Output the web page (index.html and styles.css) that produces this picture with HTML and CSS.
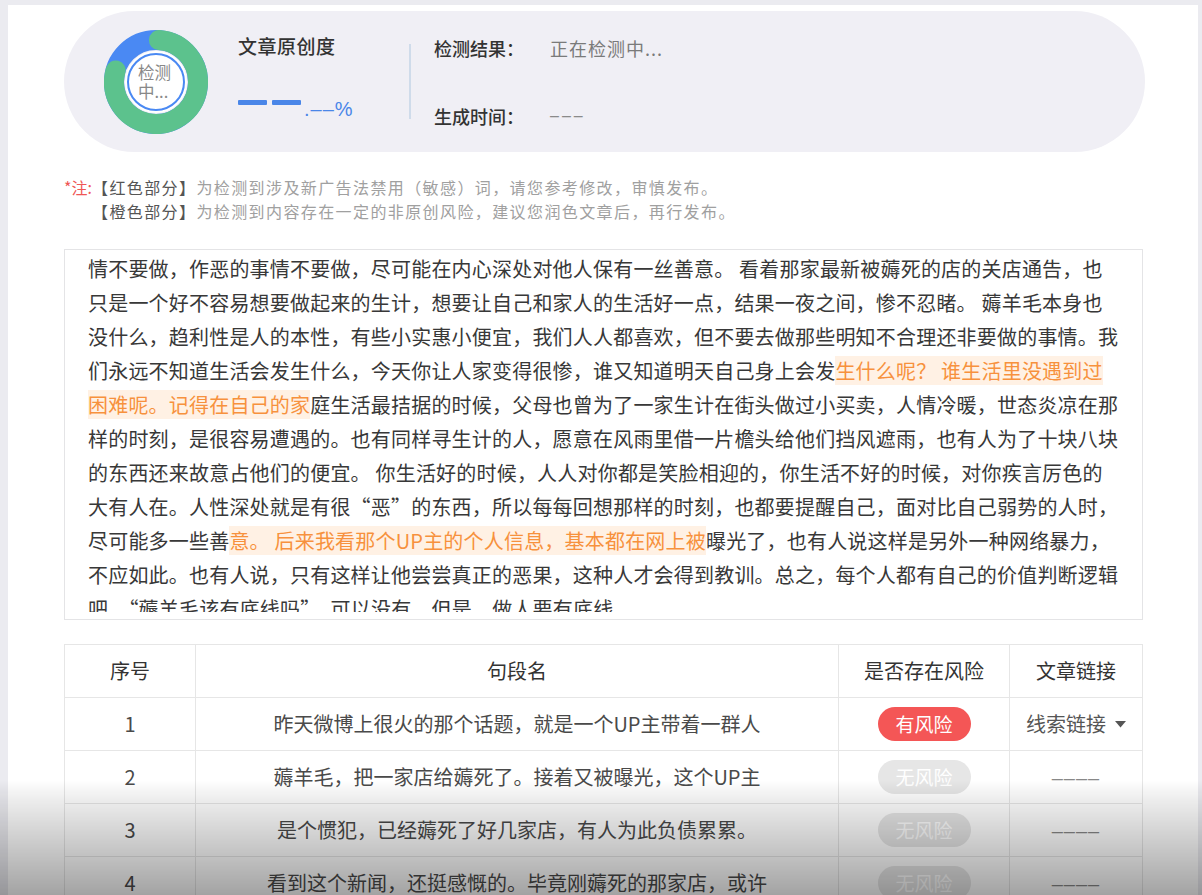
FILE: index.html
```html
<!DOCTYPE html>
<html lang="zh-CN">
<head>
<meta charset="utf-8">
<title>文章原创度检测</title>
<link rel="stylesheet" href="styles.css">
</head>
<body>
<div class="page">
  <section class="summary">
    <div class="donut">
      <svg class="donut-svg" width="104" height="104" viewBox="0 0 104 104">
        <circle cx="52" cy="52" r="42" fill="none" stroke="#4a89f3" stroke-width="20"/>
        <path d="M54.93 10.10 A42 42 0 1 1 11.63 40.42" fill="none" stroke="#5cc28d" stroke-width="20" stroke-linecap="round"/>
        <circle cx="52" cy="52" r="31" fill="#ffffff"/>
        <circle cx="52" cy="52" r="28" fill="none" stroke="#4a89f3" stroke-width="2"/>
      </svg>
      <div class="donut-text">检测<br>中...</div>
    </div>
    <div class="rate">
      <div class="rate-title">文章原创度</div>
      <div class="rate-value">
        <span class="bar"></span><span class="bar"></span><span class="pct">.––%</span>
      </div>
    </div>
    <div class="divider"></div>
    <div class="result">
      <div class="result-row"><span class="result-label">检测结果：</span><span class="result-val">正在检测中...</span></div>
      <div class="result-row"><span class="result-label">生成时间：</span><span class="result-val dash">–––</span></div>
    </div>
  </section>

  <section class="notes">
    <span class="note-mark">*注:</span>
    <div class="note-lines">
      <div><span class="note-key">【红色部分】</span>为检测到涉及新广告法禁用（敏感）词，请您参考修改，审慎发布。</div>
      <div><span class="note-key">【橙色部分】</span>为检测到内容存在一定的非原创风险，建议您润色文章后，再行发布。</div>
    </div>
  </section>

  <section class="article">
    <div class="article-scroll">
      <p class="article-text">情不要做，作恶的事情不要做，尽可能在内心深处对他人保有一丝善意。 看着那家最新被薅死的店的关店通告，也<br>只是一个好不容易想要做起来的生计，想要让自己和家人的生活好一点，结果一夜之间，惨不忍睹。 薅羊毛本身也<br>没什么，趋利性是人的本性，有些小实惠小便宜，我们人人都喜欢，但不要去做那些明知不合理还非要做的事情。我<br>们永远不知道生活会发生什么，今天你让人家变得很惨，谁又知道明天自己身上会发<span class="hl">生什么呢？ 谁生活里没遇到过<br>困难呢。记得在自己的家</span>庭生活最拮据的时候，父母也曾为了一家生计在街头做过小买卖，人情冷暖，世态炎凉在那<br>样的时刻，是很容易遭遇的。也有同样寻生计的人，愿意在风雨里借一片檐头给他们挡风遮雨，也有人为了十块八块<br>的东西还来故意占他们的便宜。 你生活好的时候，人人对你都是笑脸相迎的，你生活不好的时候，对你疾言厉色的<br>大有人在。人性深处就是有很“恶”的东西，所以每每回想那样的时刻，也都要提醒自己，面对比自己弱势的人时，<br>尽可能多一些善<span class="hl">意。 后来我看那个UP主的个人信息，基本都在网上被</span>曝光了，也有人说这样是另外一种网络暴力，<br>不应如此。也有人说，只有这样让他尝尝真正的恶果，这种人才会得到教训。总之，每个人都有自己的价值判断逻辑<br>吧，“薅羊毛该有底线吗”，可以没有，但是，做人要有底线</p>
    </div>
  </section>

  <table class="risk-table">
    <colgroup>
      <col class="c-no"><col class="c-seg"><col class="c-risk"><col class="c-link">
    </colgroup>
    <thead>
      <tr><th>序号</th><th>句段名</th><th>是否存在风险</th><th>文章链接</th></tr>
    </thead>
    <tbody>
      <tr>
        <td>1</td>
        <td>昨天微博上很火的那个话题，就是一个UP主带着一群人</td>
        <td><span class="badge badge-risk">有风险</span></td>
        <td><span class="link">线索链接<svg class="caret" width="11" height="7" viewBox="0 0 11 7"><polygon points="0,0 11,0 5.5,6.5" fill="#555"/></svg></span></td>
      </tr>
      <tr>
        <td>2</td>
        <td>薅羊毛，把一家店给薅死了。接着又被曝光，这个UP主</td>
        <td><span class="badge badge-safe">无风险</span></td>
        <td><span class="dashes">––––</span></td>
      </tr>
      <tr>
        <td>3</td>
        <td>是个惯犯，已经薅死了好几家店，有人为此负债累累。</td>
        <td><span class="badge badge-safe">无风险</span></td>
        <td><span class="dashes">––––</span></td>
      </tr>
      <tr>
        <td>4</td>
        <td>看到这个新闻，还挺感慨的。毕竟刚薅死的那家店，或许</td>
        <td><span class="badge badge-safe">无风险</span></td>
        <td><span class="dashes">––––</span></td>
      </tr>
    </tbody>
  </table>
</div>
<div class="shade"></div>
</body>
</html>
```

FILE: styles.css
```css
html, body {
  margin: 0;
  padding: 0;
}

body {
  background: #ebebf0;
  font-family: "Noto Sans CJK SC", "Noto Sans", sans-serif;
  color: #333;
  overflow: hidden;
  height: 895px;
}

.page {
  margin: 5px 4px 0 8px;
  background: #ffffff;
  padding: 6px 52px 40px 56px;
  height: 950px;
  box-sizing: border-box;
}

/* ---------- summary pill ---------- */
.summary {
  width: 1081px;
  height: 141px;
  border-radius: 71px;
  background: #f0eff5;
  display: flex;
  align-items: center;
  padding-left: 40px;
  box-sizing: border-box;
}

.donut {
  display: grid;
  width: 104px;
  height: 104px;
  place-items: center;
}

.donut-svg,
.donut-text {
  grid-area: 1 / 1;
}

.donut-svg {
  display: block;
}

.donut-text {
  width: 36px;
  font-size: 16.5px;
  line-height: 19px;
  color: #888;
}

.rate {
  align-self: stretch;
  margin-left: 30px;
  width: 171px;
  padding-top: 24px;
  box-sizing: border-box;
}

.rate-title {
  font-size: 19px;
  line-height: 22px;
  font-weight: 500;
  color: #333;
  letter-spacing: 0.5px;
}

.rate-value {
  margin-top: 42px;
  height: 20px;
  display: flex;
  align-items: flex-start;
}

.bar {
  width: 29px;
  height: 5px;
  margin-top: 1px;
  margin-right: 5px;
  background: #4a86e8;
  border-radius: 1px;
}

.bar + .bar {
  margin-right: 3px;
}

.pct {
  font-family: "Liberation Sans", sans-serif;
  font-size: 20px;
  line-height: 20px;
  letter-spacing: 1px;
  color: #4a86e8;
}

.divider {
  width: 2px;
  height: 75px;
  background: #cfdbea;
}

.result {
  margin-left: 23px;
  height: 90px;
  display: flex;
  flex-direction: column;
  justify-content: space-between;
}

.result-row {
  display: flex;
  font-size: 18px;
  line-height: 22px;
}

.result-label {
  width: 116px;
  font-weight: 500;
  color: #333;
}

.result-val {
  color: #7a7a7a;
  letter-spacing: 1px;
}

.result-val.dash {
  font-family: "Liberation Sans", sans-serif;
  font-size: 16px;
  letter-spacing: 3px;
  color: #8a8a8a;
}

/* ---------- notes ---------- */
.notes {
  display: flex;
  margin-top: 23px;
  font-size: 16px;
  line-height: 24px;
  letter-spacing: 1.4px;
  color: #a0a0a0;
}

.note-mark {
  width: 28px;
  color: #ef5656;
  letter-spacing: 0;
}

.note-key {
  color: #555;
}

/* ---------- article ---------- */
.article {
  margin-top: 26px;
  width: 1079px;
  height: 371px;
  border: 1px solid #e4e4e6;
  box-sizing: border-box;
  padding: 2px 0 7px 23px;
}

.article-scroll {
  height: 100%;
  overflow: hidden;
}

.article-text {
  margin: 0;
  font-size: 20px;
  line-height: 34px;
  letter-spacing: 0.2px;
  color: #383838;
  white-space: nowrap;
}

.hl {
  color: #f7913d;
  background: #fff1e4;
}

/* ---------- table ---------- */
.risk-table {
  margin-top: 24px;
  width: 1078px;
  border-collapse: collapse;
  table-layout: fixed;
  font-size: 20px;
}

.c-no { width: 131px; }
.c-seg { width: 643px; }
.c-risk { width: 171px; }
.c-link { width: 133px; }

.risk-table th,
.risk-table td {
  border: 1px solid #e6e6e6;
  height: 52px;
  padding: 0;
  text-align: center;
  vertical-align: middle;
  line-height: 24px;
  white-space: nowrap;
}

.risk-table th {
  font-weight: 400;
  color: #333;
}

.risk-table td {
  color: #4a4a4a;
}

.badge {
  display: inline-block;
  width: 93px;
  height: 34px;
  line-height: 34px;
  border-radius: 17px;
  color: #fff;
  font-size: 19px;
}

.badge-risk {
  background: #f45656;
}

.badge-safe {
  background: #e6e6e6;
}

.link {
  display: inline-flex;
  align-items: center;
  color: #555;
}

.caret {
  margin-left: 9px;
}

.dashes {
  font-family: "Liberation Sans", sans-serif;
  color: #888;
  letter-spacing: 1px;
}

/* ---------- video shade overlay ---------- */
.shade {
  position: fixed;
  left: 0;
  right: 0;
  top: 780px;
  height: 115px;
  background: linear-gradient(to bottom, rgba(0,0,0,0) 0%, rgba(0,0,0,0.07) 17%, rgba(0,0,0,0.36) 100%);
  pointer-events: none;
}
```
